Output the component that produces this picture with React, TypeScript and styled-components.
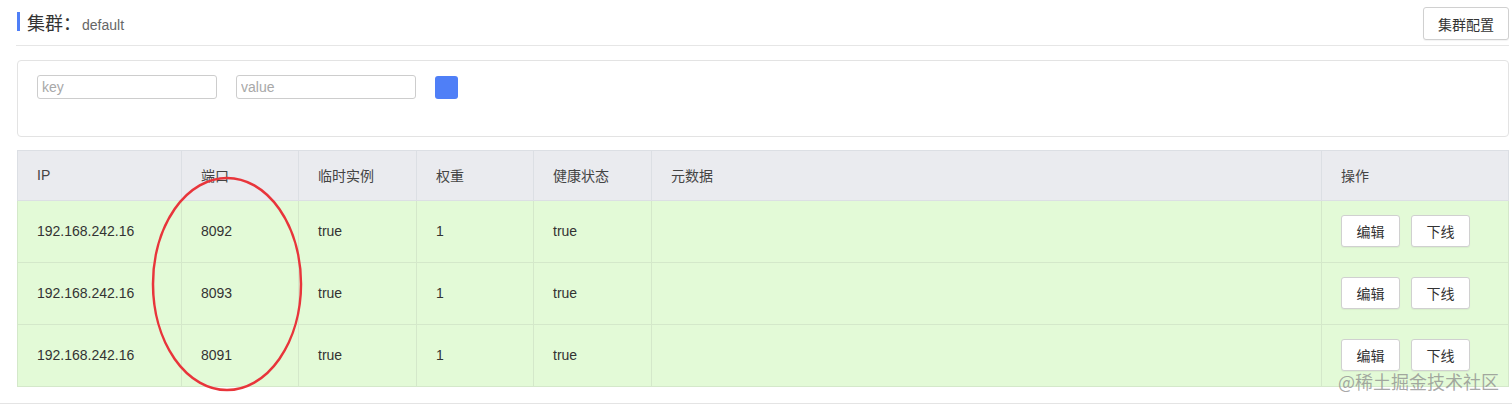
import React from 'react';
import styled, { createGlobalStyle } from 'styled-components';

const GlobalStyle = createGlobalStyle`
  html, body {
    margin: 0;
    padding: 0;
    background: #fff;
  }
  body {
    font-family: 'Liberation Sans', 'Noto Sans CJK SC', sans-serif;
    color: #333;
  }
`;

const Page = styled.div`
  position: relative;
  width: 1512px;
  box-sizing: border-box;
  padding: 0 3px 16px 17px;
  border-bottom: 1px solid #e4e4e4;
`;

const Header = styled.div`
  display: flex;
  justify-content: space-between;
  align-items: flex-start;
  height: 45px;
  margin-left: -1px;
  padding-left: 1px;
  border-bottom: 1px solid #e6e6e6;
`;

const TitleGroup = styled.div`
  display: flex;
  align-items: flex-start;
`;

const Bar = styled.span`
  width: 3px;
  height: 19px;
  margin-top: 12px;
  background: #4f7ff7;
`;

const Title = styled.div`
  margin: 13px 0 0 7px;
  line-height: 22px;
  font-size: 18px;
  color: #333;
`;

const Cluster = styled.span`
  margin-left: 1px;
  font-size: 14px;
  color: #666;
`;

const Button = styled.button<{ $w: number; $h: number }>`
  width: ${(p) => p.$w}px;
  height: ${(p) => p.$h}px;
  padding: 0;
  background: #fff;
  border: 1px solid #d0d0d0;
  border-radius: 3px;
  box-shadow: 0 1px 1px rgba(0, 0, 0, 0.05);
  font-family: inherit;
  font-size: 14px;
  color: #333;
`;

const HeaderButton = styled(Button)`
  margin-top: 7px;
`;

const SearchCard = styled.div`
  margin-top: 14px;
  height: 77px;
  box-sizing: border-box;
  padding: 14px 19px;
  border: 1px solid #e3e3e3;
  border-radius: 4px;
  display: flex;
  align-items: flex-start;
  gap: 19px;
`;

const Input = styled.input`
  width: 180px;
  height: 24px;
  box-sizing: border-box;
  padding: 0 4px;
  border: 1px solid #cdcdcd;
  border-radius: 3px;
  font-family: inherit;
  font-size: 14px;
  color: #333;
  outline: none;
  &::placeholder {
    color: #a8a8a8;
  }
`;

const SearchButton = styled.button`
  width: 23px;
  height: 23px;
  margin-top: 1px;
  padding: 0;
  border: none;
  border-radius: 3px;
  background: #4f7ff7;
`;

const Table = styled.table`
  margin-top: 13px;
  width: 1492px;
  border-collapse: collapse;
  table-layout: fixed;
  font-size: 14px;
`;

const Th = styled.th<{ $w?: number }>`
  width: ${(p) => (p.$w ? `${p.$w}px` : 'auto')};
  height: 50px;
  box-sizing: border-box;
  padding: 0 19px 1px;
  text-align: left;
  font-weight: normal;
  color: #444;
  background: #eaebef;
  border: 1px solid #dcdfe4;
`;

const Td = styled.td`
  height: 62px;
  box-sizing: border-box;
  padding: 0 19px 1px;
  color: #333;
  background: #e3fad7;
  border: 1px solid #d4e8ca;
`;

const Actions = styled.div`
  display: flex;
  gap: 11px;
`;

const Ellipse = styled.svg`
  position: absolute;
  left: 150px;
  top: 175px;
  pointer-events: none;
`;

const Watermark = styled.div`
  position: absolute;
  left: 1338px;
  top: 368px;
  font-family: 'Noto Sans CJK SC', sans-serif;
  font-size: 18px;
  color: rgba(140, 140, 140, 0.75);
`;

const columns = [
  { label: 'IP', w: 164 },
  { label: '端口', w: 117 },
  { label: '临时实例', w: 118 },
  { label: '权重', w: 117 },
  { label: '健康状态', w: 118 },
  { label: '元数据' },
  { label: '操作', w: 187 },
];

const instances = [
  { ip: '192.168.242.16', port: 8092 },
  { ip: '192.168.242.16', port: 8093 },
  { ip: '192.168.242.16', port: 8091 },
];

export default function App() {
  return (
    <>
      <GlobalStyle />
      <Page>
        <Header>
          <TitleGroup>
            <Bar />
            <Title>
              集群：<Cluster>default</Cluster>
            </Title>
          </TitleGroup>
          <HeaderButton $w={86} $h={33}>集群配置</HeaderButton>
        </Header>
        <SearchCard>
          <Input placeholder='key' />
          <Input placeholder='value' />
          <SearchButton />
        </SearchCard>
        <Table>
          <thead>
            <tr>
              {columns.map((c) => (
                <Th key={c.label} $w={c.w}>
                  {c.label}
                </Th>
              ))}
            </tr>
          </thead>
          <tbody>
            {instances.map((row) => (
              <tr key={row.port}>
                <Td>{row.ip}</Td>
                <Td>{row.port}</Td>
                <Td>true</Td>
                <Td>1</Td>
                <Td>true</Td>
                <Td />
                <Td>
                  <Actions>
                    <Button $w={59} $h={32}>编辑</Button>
                    <Button $w={59} $h={32}>下线</Button>
                  </Actions>
                </Td>
              </tr>
            ))}
          </tbody>
        </Table>
        <Ellipse width='156' height='218' viewBox='0 0 156 218'>
          <ellipse cx='77' cy='109' rx='74' ry='106' fill='none' stroke='#e8353b' strokeWidth='2.5' />
        </Ellipse>
        <Watermark>@稀土掘金技术社区</Watermark>
      </Page>
    </>
  );
}
